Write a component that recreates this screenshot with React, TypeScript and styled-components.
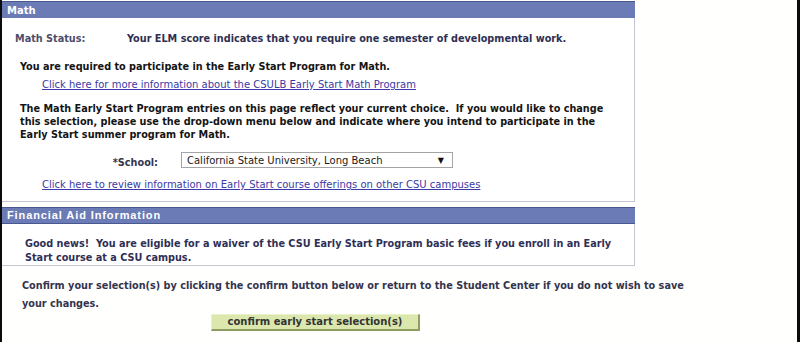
import React from "react";
import styled, { createGlobalStyle } from "styled-components";

const GlobalStyle = createGlobalStyle`
  html, body { margin: 0; padding: 0; background: #fffffd; }
  * { box-sizing: border-box; }
`;

const Frame = styled.div`
  height: 342px;
  width: 800px;
  overflow: hidden;
  border-left: 2px solid #0b0b0b;
  border-right: 3px solid #0b0b0b;
  background: #fffffd;
  font-family: "DejaVu Sans", Verdana, sans-serif;
  font-size: 10px;
`;

const Column = styled.div`
  width: 633px;
  padding-top: 1px;
`;

const SectionHeader = styled.div<{ $spaced?: boolean }>`
  height: 17px;
  background: #6b7bb5;
  border-top: 1px solid #4a5890;
  border-bottom: ${(p) => (p.$spaced ? "1px solid #4a5890" : "0")};
  color: #ffffff;
  font-weight: bold;
  font-family: ${(p) =>
    p.$spaced ? '"Liberation Sans", Arial, sans-serif' : '"DejaVu Sans", Verdana, sans-serif'};
  font-size: ${(p) => (p.$spaced ? "11px" : "10px")};
  letter-spacing: ${(p) => (p.$spaced ? "0.9px" : "0")};
  line-height: ${(p) => (p.$spaced ? "15px" : "17px")};
  padding-left: 5px;
`;

const Panel = styled.div<{ $pt: number; $pb: number }>`
  background: #ffffff;
  border-right: 1px solid #c6c6d2;
  border-bottom: 1px solid #c6c6d2;
  padding: ${(p) => p.$pt}px 0 ${(p) => p.$pb}px 0;
`;

const StatusRow = styled.div`
  display: grid;
  grid-template-columns: 112px 1fr;
  padding-left: 13px;
  font-size: 9.7px;
  font-weight: bold;
  line-height: 13px;
`;

const StatusLabel = styled.span`
  color: #4e4e6c;
`;

const StatusValue = styled.span`
  color: #2f2f52;
`;

const BoldText = styled.div<{ $mt: number; $pl: number; $lh?: number; $color?: string }>`
  margin-top: ${(p) => p.$mt}px;
  padding-left: ${(p) => p.$pl}px;
  font-size: 9.7px;
  font-weight: bold;
  line-height: ${(p) => p.$lh ?? 13}px;
  color: ${(p) => p.$color ?? "#141414"};
  white-space: nowrap;
`;

const LinkLine = styled.div<{ $mt: number }>`
  margin-top: ${(p) => p.$mt}px;
  padding-left: 40px;
  font-size: 10px;
  line-height: 13px;
`;

const Link = styled.a`
  color: #3a3aa6;
  text-decoration: underline;
  cursor: pointer;
`;

const SchoolRow = styled.div`
  margin-top: 11px;
  display: flex;
  align-items: center;
  height: 16px;
`;

const SchoolLabel = styled.span`
  width: 156px;
  padding-top: 4px;
  text-align: right;
  font-size: 9.7px;
  font-weight: bold;
  color: #34344f;
`;

const SelectBox = styled.div`
  margin-left: 23px;
  width: 272px;
  height: 16px;
  border: 1px solid #a4a4a4;
  background: #ffffff;
  display: flex;
  align-items: center;
  justify-content: space-between;
  padding: 0 8px 0 5px;
  font-size: 10px;
  color: #1a1a1a;
`;

const Arrow = styled.span`
  font-size: 8px;
  color: #111;
`;

const Gap = styled.div<{ $h: number }>`
  height: ${(p) => p.$h}px;
`;

const ButtonRow = styled.div`
  margin-top: 1px;
  padding-left: 209px;
  line-height: 0;
`;

const ConfirmButton = styled.button`
  width: 209px;
  height: 17px;
  padding: 0;
  background: #dbe7ad;
  border-top: 1px solid #e9f1cb;
  border-left: 1px solid #e9f1cb;
  border-right: 2px solid #8f9c62;
  border-bottom: 2px solid #8f9c62;
  font-family: "DejaVu Sans", Verdana, sans-serif;
  font-size: 10px;
  font-weight: bold;
  color: #333333;
  line-height: 14px;
`;

export default function App() {
  return (
    <>
      <GlobalStyle />
      <Frame>
        <Column>
          <SectionHeader>Math</SectionHeader>
          <Panel $pt={14} $pb={10}>
            <StatusRow>
              <StatusLabel>Math Status:</StatusLabel>
              <StatusValue>
                Your ELM score indicates that you require one semester of developmental work.
              </StatusValue>
            </StatusRow>
            <BoldText $mt={15} $pl={18}>
              You are required to participate in the Early Start Program for Math.
            </BoldText>
            <LinkLine $mt={5}>
              <Link>Click here for more information about the CSULB Early Start Math Program</Link>
            </LinkLine>
            <BoldText $mt={11} $pl={18}>
              The Math Early Start Program entries on this page reflect your current choice.&nbsp; If you
              would like to change
              <br />
              this selection, please use the drop-down menu below and indicate where you intend to
              participate in the
              <br />
              Early Start summer program for Math.
            </BoldText>
            <SchoolRow>
              <SchoolLabel>*School:</SchoolLabel>
              <SelectBox>
                <span>California State University, Long Beach</span>
                <Arrow>▼</Arrow>
              </SelectBox>
            </SchoolRow>
            <LinkLine $mt={10}>
              <Link>Click here to review information on Early Start course offerings on other CSU campuses</Link>
            </LinkLine>
          </Panel>
          <Gap $h={5} />
          <SectionHeader $spaced>Financial Aid Information</SectionHeader>
          <Panel $pt={13} $pb={0}>
            <BoldText $mt={0} $pl={23} $lh={14} $color="#2f2f56">
              Good news!&nbsp; You are eligible for a waiver of the CSU Early Start Program basic fees if you
              enroll in an Early
              <br />
              Start course at a CSU campus.
            </BoldText>
          </Panel>
        </Column>
        <BoldText $mt={11} $pl={20} $lh={18} $color="#34344f">
          Confirm your selection(s) by clicking the confirm button below or return to the Student Center if
          you do not wish to save
          <br />
          your changes.
        </BoldText>
        <ButtonRow>
          <ConfirmButton>confirm early start selection(s)</ConfirmButton>
        </ButtonRow>
      </Frame>
    </>
  );
}
